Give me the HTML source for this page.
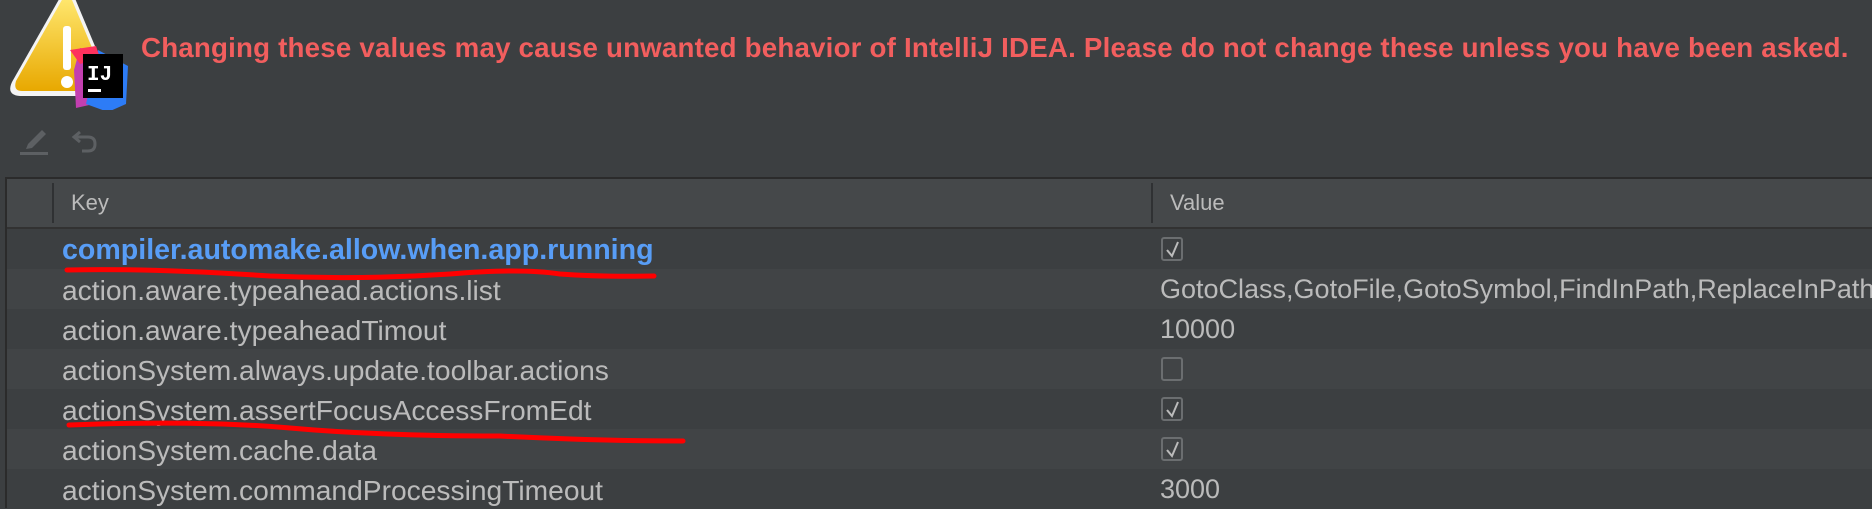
<!DOCTYPE html>
<html><head><meta charset="utf-8"><style>
html,body{margin:0;padding:0;}
body{width:1872px;height:506px;background:#3c3f41;position:relative;overflow:hidden;font-family:"Liberation Sans",sans-serif;}
.warn{position:absolute;left:141px;top:32px;color:#f25e5e;font-weight:bold;font-size:27.7px;white-space:nowrap;letter-spacing:0.2px}
.table{position:absolute;left:5px;top:177px;width:1867px;height:329px;background:#3c3f41;border-top:2px solid #2b2b2b;border-left:2px solid #2b2b2b}
.hdr{position:absolute;left:0;top:0;width:100%;height:48px;background:#45484a;border-bottom:2px solid #323232}
.sep{position:absolute;top:4px;width:2px;height:40px;background:#2f3133}
.hdr span{position:absolute;top:11px;color:#bbbbbb;font-size:22px}
.row{position:absolute;left:0;width:100%;height:40px;}
.row .k{position:absolute;left:55px;top:5px;color:#bbbbbb;font-size:28.2px;white-space:nowrap}
.row .v{position:absolute;left:1153px;top:5px;color:#bbbbbb;font-size:27px;white-space:nowrap}
.cb{position:absolute;left:1154px;top:8px;width:22px;height:24px;border:2px solid #6b6e70;border-radius:3px;box-sizing:border-box}
.cb svg{position:absolute;left:2px;top:2px}
.d{background:#3c3f41}.l{background:#414446}
</style></head><body>
<svg style="position:absolute;left:0;top:0" width="140" height="110" viewBox="0 0 140 110">
  <defs><linearGradient id="g" x1="0" y1="0" x2="0" y2="1"><stop offset="0" stop-color="#ffe870"/><stop offset="1" stop-color="#e8a800"/></linearGradient></defs>
  <path d="M62,-6 Q68,-10 74,-4 L110,82 Q114,95 100,96 L20,96 Q6,95 12,82 Z" fill="#f4f4f4"/>
  <path d="M63,-2 Q68,-5 72,0 L106,81 Q109,91 99,91 L22,91 Q13,91 16,81 Z" fill="url(#g)"/>
  <rect x="63" y="26" width="8" height="44" rx="3" fill="#fff"/>
  <circle cx="67" cy="82" r="6" fill="#fff"/>
  <polygon points="74,70 80,48 108,55 98,103 76,108" fill="#c33fb0"/>
  <polygon points="98,50 128,66 126,104 108,112 86,104" fill="#2d7cf6"/>
  <polygon points="70,50 96,46 100,58 80,64" fill="#fe315d"/>
  <rect x="83" y="54" width="40" height="44" fill="#000"/>
  <text x="87" y="80" fill="#fff" font-family="Liberation Mono" font-weight="bold" font-size="21">IJ</text>
  <rect x="88" y="89" width="13" height="3" fill="#fff"/>
</svg>
<div class="warn">Changing these values may cause unwanted behavior of IntelliJ IDEA. Please do not change these unless you have been asked.</div>
<svg style="position:absolute;left:18px;top:124px" width="90" height="34" viewBox="0 0 90 34">
  <path d="M10,20 L24,6 L28,10 L14,24 L8,25 Z" fill="#5d6063"/>
  <rect x="2" y="28" width="28" height="3" fill="#5d6063"/>
  <path d="M62,8 L56,13 L62,18 M57,13 L70,13 Q77,13 77,20 Q77,27 70,27 L64,27" fill="none" stroke="#5d6063" stroke-width="3"/>
</svg>
<div class="table">
  <div class="hdr"><div class="sep" style="left:45px"></div><div class="sep" style="left:1144px"></div><span style="left:64px">Key</span><span style="left:1163px">Value</span></div>
  <div class="row d" style="top:50px"><span class="k" style="color:#589df6;font-weight:bold;font-size:28.6px">compiler.automake.allow.when.app.running</span><div class="cb"><svg width="16" height="18"><path d="M2,9 L7,15 L13,1" fill="none" stroke="#bbb" stroke-width="2"/></svg></div></div>
  <div class="row l" style="top:90px"><span class="k">action.aware.typeahead.actions.list</span><span class="v">GotoClass,GotoFile,GotoSymbol,FindInPath,ReplaceInPath</span></div>
  <div class="row d" style="top:130px"><span class="k">action.aware.typeaheadTimout</span><span class="v">10000</span></div>
  <div class="row l" style="top:170px"><span class="k">actionSystem.always.update.toolbar.actions</span><div class="cb"></div></div>
  <div class="row d" style="top:210px"><span class="k">actionSystem.assertFocusAccessFromEdt</span><div class="cb"><svg width="16" height="18"><path d="M2,9 L7,15 L13,1" fill="none" stroke="#bbb" stroke-width="2"/></svg></div></div>
  <div class="row l" style="top:250px"><span class="k">actionSystem.cache.data</span><div class="cb"><svg width="16" height="18"><path d="M2,9 L7,15 L13,1" fill="none" stroke="#bbb" stroke-width="2"/></svg></div></div>
  <div class="row d" style="top:290px"><span class="k">actionSystem.commandProcessingTimeout</span><span class="v">3000</span></div>
</div>
<svg style="position:absolute;left:0;top:0" width="1872" height="506">
  <path d="M67,270 Q150,268 270,276 Q360,280 450,274 Q520,268 560,274 Q600,277 654,276" fill="none" stroke="#ff0000" stroke-width="5" stroke-linecap="round"/>
  <path d="M69,425 Q200,420 290,428 Q380,436 500,436 Q600,441 683,441" fill="none" stroke="#ff0000" stroke-width="5" stroke-linecap="round"/>
</svg>
</body></html>
